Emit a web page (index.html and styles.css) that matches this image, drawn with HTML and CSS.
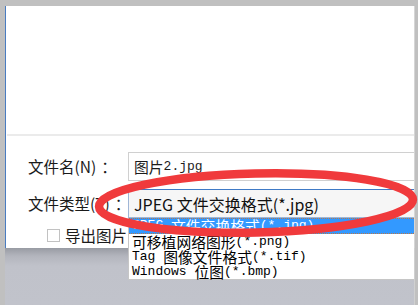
FILE: index.html
```html
<!DOCTYPE html>
<html lang="zh-CN">
<head>
<meta charset="utf-8">
<title>另存为</title>
<link rel="stylesheet" href="styles.css">
</head>
<body>
<div class="screen">
  <div class="window">
    <div class="preview"></div>
    <div class="form">
      <label class="lbl">文件名(N)<span class="colon">：</span></label>
      <div class="input"><span class="c">图片</span><span class="a">2.jpg</span></div>

      <label class="lbl">文件类型(T)<span class="colon">：</span></label>
      <div class="combo">
        <span class="combo-text">JPEG 文件交换格式(*.jpg)</span>
        <ul class="list">
          <li class="sel"><span class="a">JPEG </span><span class="c">文件交换格式</span><span class="a">(*.jpg)</span></li>
          <li><span class="c">可移植网络图形</span><span class="a">(*.png)</span></li>
          <li><span class="a">Tag </span><span class="c">图像文件格式</span><span class="a">(*.tif)</span></li>
          <li><span class="a">Windows </span><span class="c">位图</span><span class="a">(*.bmp)</span></li>
        </ul>
      </div>

      <div class="check-row">
        <span class="box"></span><span class="check-text">导出图片</span>
      </div>
    </div>
  </div>
  <div class="shelf"></div>
  <svg class="mark" width="418" height="305" viewBox="0 0 418 305">
    <ellipse cx="256" cy="203" rx="157" ry="29.5" transform="rotate(-1.3 256 203)" fill="none" stroke="#f03a3c" stroke-width="8.5"/>
  </svg>
</div>
</body>
</html>
```

FILE: styles.css
```css
* { box-sizing: border-box; }
html, body { margin: 0; padding: 0; }
body {
  background: #c0c0c0;
  font-family: "Noto Sans CJK SC", "Liberation Sans", sans-serif;
  color: #1c1c1c;
}
.screen {
  position: relative;
  width: 418px;
  height: 305px;
  padding: 6px 0 0 5px;
  overflow: hidden;
}
.window {
  width: 410px;
  height: 242px;
  background: #fff;
  border-left: 1px solid #4a7cc0;
  border-right: 1px solid #d6d6d6;
  position: relative;
  z-index: 1;
}
.preview {
  height: 130px;
  border-bottom: 2px solid #ebebeb;
  margin-left: 1px;
}
.form {
  display: grid;
  grid-template-columns: 100px 1fr;
  row-gap: 8px;
  padding: 16px 0 0 22px;
}
.lbl {
  font-size: 15.5px;
  line-height: 29px;
  height: 29px;
  white-space: nowrap;
  color: #1a1a1a;
}
.colon {
  margin-left: 5px;
}
.input {
  height: 29px;
  border: 1px solid #d0d0d0;
  border-right: none;
  padding-left: 5px;
  display: flex;
  align-items: center;
  background: #fff;
}
.c {
  font-family: "Noto Sans CJK SC", sans-serif;
  font-size: 14.8px;
}
.a {
  font-family: "Liberation Mono", monospace;
  font-size: 13px;
  white-space: pre;
}
.combo {
  position: relative;
  height: 29px;
  border: 1px solid #9fb6d6;
  border-top-color: #3f7ac6;
  border-right: none;
  background: #f6f6f6;
  padding-left: 5px;
  display: flex;
  align-items: center;
}
.combo-text {
  font-size: 16px;
  white-space: nowrap;
  color: #111;
}
.list {
  position: absolute;
  left: -1px;
  right: 0;
  top: calc(100% + 1px);
  margin: 0;
  padding: 0;
  list-style: none;
  background: #fff;
  border: 1px solid #c6c6c6;
  border-top: none;
  border-right: none;
  z-index: 2;
}
.list li {
  height: 15px;
  line-height: 15px;
  padding-left: 3px;
  white-space: nowrap;
  color: #000;
  display: flex;
  align-items: center;
}
.list li.sel {
  height: 16px;
  line-height: 14px;
  background: #3399ff;
  color: #fff;
  border-top: 1px dotted #b8784a;
  border-bottom: 1px dotted #b8784a;
}
.check-row {
  grid-column: 1 / span 2;
  display: flex;
  align-items: center;
  padding-left: 19px;
  margin-top: 2px;
  height: 14px;
}
.box {
  width: 13px;
  height: 13px;
  border: 1px solid #c2c2c2;
  background: #fff;
  margin-right: 5px;
}
.check-text {
  font-size: 15.5px;
  line-height: 14px;
  white-space: nowrap;
  color: #1a1a1a;
}
.shelf {
  width: 410px;
  height: 57px;
  background: linear-gradient(#989ba3 0px, #b3b5bd 8px, #c0c2ca 18px, #c1c3cb 57px);
  border-right: 1px solid #d0d0d0;
}
.mark {
  position: absolute;
  top: 0;
  left: 0;
  z-index: 5;
  pointer-events: none;
}
```
